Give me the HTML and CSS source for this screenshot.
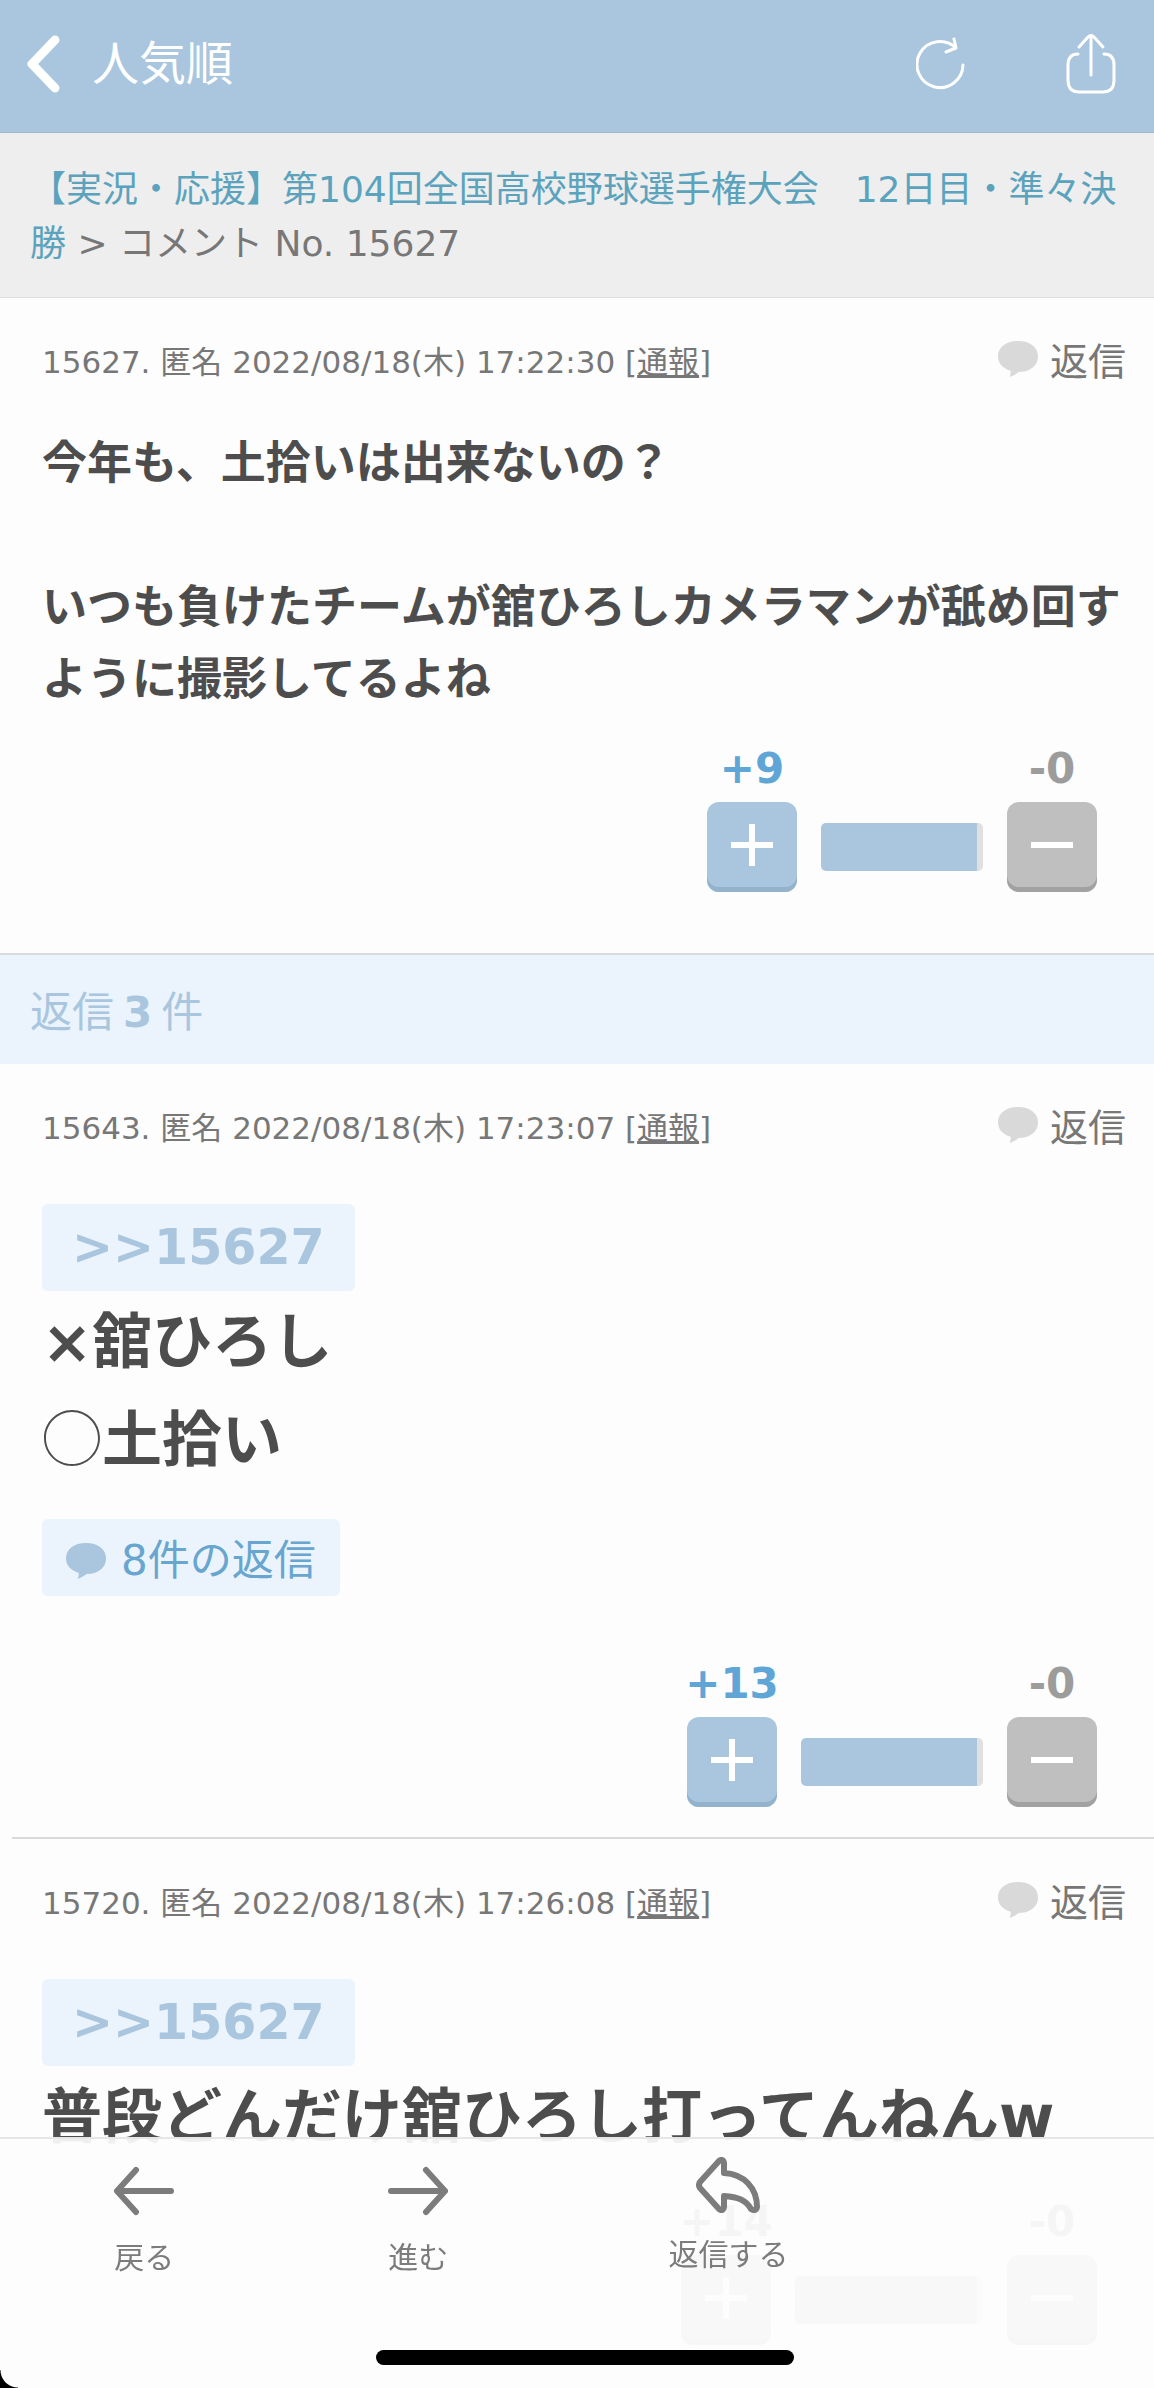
FILE: index.html
```html
<!DOCTYPE html>
<html lang="ja">
<head>
    <meta charset="UTF-8">
    <meta name="viewport" content="width=device-width, initial-scale=1.0">
    <title>コメント No. 15627</title>
    <link rel="stylesheet" href="styles.css">
</head>
<body>
    <svg class="symbols" aria-hidden="true">
        <symbol id="bubble" viewBox="0 0 40 36">
            <path d="M20 0C8 0 0 6 0 15.500C0 22.500 5 27.500 12.500 29.800C13 32 12.500 34 11.500 36C15.500 34.500 18.500 32.800 20.500 31C32 31 40 25 40 15.500C40 6 32 0 20 0Z"/>
        </symbol>
        <symbol id="plus" viewBox="0 0 44 44">
            <path d="M22 1V43M1 22H43" stroke="#fff" stroke-width="6"/>
        </symbol>
        <symbol id="minus" viewBox="0 0 44 44">
            <path d="M1 22H43" stroke="#fff" stroke-width="6"/>
        </symbol>
    </svg>

    <header class="app-bar">
        <a class="back" href="#">
            <svg width="34" height="60" viewBox="0 0 34 60" fill="none" stroke="#fff" stroke-width="9" stroke-linecap="round" stroke-linejoin="round"><path d="M28 6L5 30L28 54"/></svg>
            <span>人気順</span>
        </a>
        <div class="app-actions">
            <button class="icon-button" type="button" aria-label="更新">
                <svg width="50" height="60" viewBox="0 0 50 60" fill="none" stroke="#fff" stroke-width="3" stroke-linecap="round" stroke-linejoin="round"><path d="M47 31A23 23 0 1 1 40 14M38 5L40 14L30 18"/></svg>
            </button>
            <button class="icon-button" type="button" aria-label="共有">
                <svg width="50" height="60" viewBox="0 0 50 60" fill="none" stroke="#fff" stroke-width="3" stroke-linecap="round" stroke-linejoin="round"><path d="M25 41V2M13 13L22 3Q25 0 28 3L37 13M12 20Q2 20 2 31V46Q2 58 13 58H37Q48 58 48 46V31Q48 20 38 20"/></svg>
            </button>
        </div>
    </header>

    <nav class="breadcrumb">
        <a href="#">【実況・応援】第104回全国高校野球選手権大会　12日目・準々決勝</a> &gt; コメント No. 15627
    </nav>

    <main>
        <article class="post main-post">
            <div class="post-head">
                <p class="meta">15627. 匿名 2022/08/18(木) 17:22:30 [<a href="#">通報</a>]</p>
                <button class="reply" type="button"><svg class="bubble"><use href="#bubble"/></svg>返信</button>
            </div>
            <p class="text">今年も、土拾いは出来ないの？<br><br>いつも負けたチームが舘ひろしカメラマンが舐め回すように撮影してるよね</p>
            <div class="votes">
                <div class="vote plus">
                    <span>+9</span>
                    <button type="button" aria-label="プラス"><svg><use href="#plus"/></svg></button>
                </div>
                <div class="bar short"></div>
                <div class="vote minus">
                    <span>-0</span>
                    <button type="button" aria-label="マイナス"><svg><use href="#minus"/></svg></button>
                </div>
            </div>
        </article>

        <h2 class="replies-title"><span>返信</span><b>3</b><span>件</span></h2>

        <article class="post">
            <div class="post-head">
                <p class="meta">15643. 匿名 2022/08/18(木) 17:23:07 [<a href="#">通報</a>]</p>
                <button class="reply" type="button"><svg class="bubble"><use href="#bubble"/></svg>返信</button>
            </div>
            <a class="anchor" href="#">&gt;&gt;15627</a>
            <p class="text large">×舘ひろし<br><span class="maru">◯</span>土拾い</p>
            <a class="reply-count" href="#"><svg class="bubble"><use href="#bubble"/></svg>8件の返信</a>
            <div class="votes">
                <div class="vote plus">
                    <span>+13</span>
                    <button type="button" aria-label="プラス"><svg><use href="#plus"/></svg></button>
                </div>
                <div class="bar"></div>
                <div class="vote minus">
                    <span>-0</span>
                    <button type="button" aria-label="マイナス"><svg><use href="#minus"/></svg></button>
                </div>
            </div>
        </article>

        <article class="post">
            <div class="post-head">
                <p class="meta">15720. 匿名 2022/08/18(木) 17:26:08 [<a href="#">通報</a>]</p>
                <button class="reply" type="button"><svg class="bubble"><use href="#bubble"/></svg>返信</button>
            </div>
            <a class="anchor" href="#">&gt;&gt;15627</a>
            <p class="text large">普段どんだけ舘ひろし打ってんねんw</p>
            <div class="votes">
                <div class="vote plus">
                    <span>+14</span>
                    <button type="button" aria-label="プラス"><svg><use href="#plus"/></svg></button>
                </div>
                <div class="bar long"></div>
                <div class="vote minus">
                    <span>-0</span>
                    <button type="button" aria-label="マイナス"><svg><use href="#minus"/></svg></button>
                </div>
            </div>
        </article>
    </main>

    <footer class="tool-bar">
        <div class="tools">
            <button class="tool" type="button">
                <svg width="60" height="50" viewBox="0 0 60 50" fill="none" stroke="#7c7c7c" stroke-width="6" stroke-linecap="round" stroke-linejoin="round"><path d="M22 4L3 25L22 46M3 25H57"/></svg>
                <span>戻る</span>
            </button>
            <button class="tool" type="button">
                <svg width="60" height="50" viewBox="0 0 60 50" fill="none" stroke="#7c7c7c" stroke-width="6" stroke-linecap="round" stroke-linejoin="round"><path d="M38 4L57 25L38 46M57 25H3"/></svg>
                <span>進む</span>
            </button>
            <button class="tool reply-tool" type="button">
                <svg width="64" height="56" viewBox="0 0 64 56" fill="none" stroke="#7c7c7c" stroke-width="6" stroke-linejoin="round"><path d="M23 4Q27 1 28 6V16C48 17 61 31 61 50Q60 55 55 52C50 43 42 40 28 39V50Q27 55 23 52L4 31Q2 28 4 25Z"/></svg>
                <span>返信する</span>
            </button>
        </div>
        <div class="home-indicator"></div>
    </footer>
</body>
</html>
```

FILE: styles.css
```css
* {
    box-sizing: border-box;
}
body {
    margin: 0;
    min-height: 100vh;
    background-color: #fdfdfd;
    color: #777;
    font-family: "DejaVu Sans", "Noto Sans CJK JP", sans-serif;
}
p, h2 {
    margin: 0;
}
button {
    padding: 0;
    border: none;
    background: none;
    color: inherit;
    font-family: inherit;
    cursor: pointer;
}
svg {
    display: block;
}
.symbols {
    display: none;
}

/* top bar */
.app-bar {
    display: flex;
    align-items: center;
    justify-content: space-between;
    height: 133px;
    padding: 0 38px 4px 27px;
    background-color: #a9c6de;
    border-bottom: 1px solid #9dbad2;
}
.back {
    display: flex;
    align-items: center;
    gap: 31px;
    color: #fff;
    font-size: 47px;
    line-height: 60px;
    text-decoration: none;
}
.app-actions {
    display: flex;
    gap: 100px;
}

.breadcrumb {
    padding: 30px 30px 26px;
    background-color: #eee;
    border-bottom: 1px solid #ddd;
    font-size: 36px;
    line-height: 54px;
}
.breadcrumb a {
    color: #5ba3bd;
    text-decoration: none;
}

/* comments */
.post {
    padding: 40px 28px 30px 42px;
}
.post + .post {
    margin-left: 12px;
    padding-left: 30px;
    border-top: 2px solid #dadada;
}
.main-post {
    padding-bottom: 61px;
}
.post-head {
    display: flex;
    align-items: center;
    justify-content: space-between;
    height: 48px;
}
.meta {
    font-size: 31px;
    line-height: 48px;
}
.meta a {
    color: inherit;
}
.reply {
    display: flex;
    align-items: center;
    gap: 12px;
    font-size: 38px;
    line-height: 48px;
}
.bubble {
    width: 40px;
    height: 36px;
    fill: #d9d9d9;
}
.reply .bubble {
    margin-bottom: 6px;
}
.text {
    margin-top: 42px;
    margin-right: -18px;
    color: #4d4d4d;
    font-size: 45px;
    font-weight: bold;
    line-height: 72px;
}
.text.large {
    margin-top: 2px;
    font-size: 60px;
    line-height: 98px;
}
.maru {
    font-family: "Noto Sans CJK JP", sans-serif;
    font-weight: normal;
    line-height: 1;
}
.anchor {
    display: block;
    width: fit-content;
    margin-top: 52px;
    padding: 0 30px;
    border-radius: 6px;
    background-color: #ebf4fc;
    color: #a9c6de;
    font-size: 49px;
    font-weight: bold;
    line-height: 87px;
    text-decoration: none;
}
.reply-count {
    display: flex;
    align-items: center;
    gap: 15px;
    width: fit-content;
    height: 77px;
    margin: 30px 0 63px;
    padding: 7px 24px 0;
    border-radius: 6px;
    background-color: #ebf4fc;
    color: #68a5cf;
    font-size: 42px;
    line-height: 60px;
    text-decoration: none;
}
.reply-count .bubble {
    fill: #a9c6de;
}
.replies-title {
    display: flex;
    gap: 9px;
    padding: 7px 30px 0;
    border-top: 2px solid #dadada;
    background-color: #ebf4fc;
    color: #a9c6de;
    font-size: 42px;
    font-weight: normal;
    line-height: 102px;
}

/* vote buttons */
.votes {
    display: flex;
    align-items: flex-end;
    justify-content: flex-end;
    gap: 24px;
    margin-top: 31px;
    padding-right: 29px;
}
.main-post .votes {
    margin-top: 28px;
}
.reply-count + .votes {
    margin-top: 0;
}
.vote {
    display: flex;
    flex-direction: column;
    align-items: center;
    gap: 8px;
    width: 90px;
    font-size: 42px;
    font-weight: bold;
    line-height: 50px;
}
.vote button {
    display: flex;
    align-items: center;
    justify-content: center;
    width: 90px;
    height: 90px;
    padding-bottom: 5px;
    border-radius: 12px;
}
.vote button svg {
    width: 44px;
    height: 44px;
}
.plus {
    color: #5fa6d6;
}
.plus button {
    background-color: #a9c6de;
    box-shadow: inset 0 -5px 0 #93b2cc;
}
.minus {
    color: #9c9c9c;
}
.minus button {
    background-color: #bfbfbf;
    box-shadow: inset 0 -5px 0 #a2a2a2;
}
.bar {
    width: 182px;
    height: 48px;
    margin-bottom: 21px;
    border-right: 6px solid #e0e0e0;
    border-radius: 5px;
    background-color: #a9c6de;
}
.bar.short {
    width: 162px;
}
.bar.long {
    width: 188px;
}

/* bottom bar, the page shows through slightly */
.tool-bar {
    position: fixed;
    right: 0;
    bottom: 0;
    left: 0;
    height: 251px;
    border-top: 2px solid #e6e6e6;
    background: radial-gradient(circle at 100% 0, transparent 17px, #000 18px) left bottom / 18px 18px no-repeat, rgba(253, 253, 253, 0.92);
    backdrop-filter: grayscale(1);
    color: #7c7c7c;
}
.tools {
    display: grid;
    grid-template-columns: 20fr 18fr 25fr 17fr;
    align-items: start;
    padding-top: 27px;
}
.tool {
    display: flex;
    flex-direction: column;
    align-items: center;
    gap: 18px;
    font-size: 30px;
    line-height: 48px;
}
.reply-tool {
    margin-top: -9px;
}
.home-indicator {
    position: absolute;
    bottom: 23px;
    left: 50%;
    width: 418px;
    height: 15px;
    margin-left: -201px;
    border-radius: 8px;
    background-color: #000;
}
```
